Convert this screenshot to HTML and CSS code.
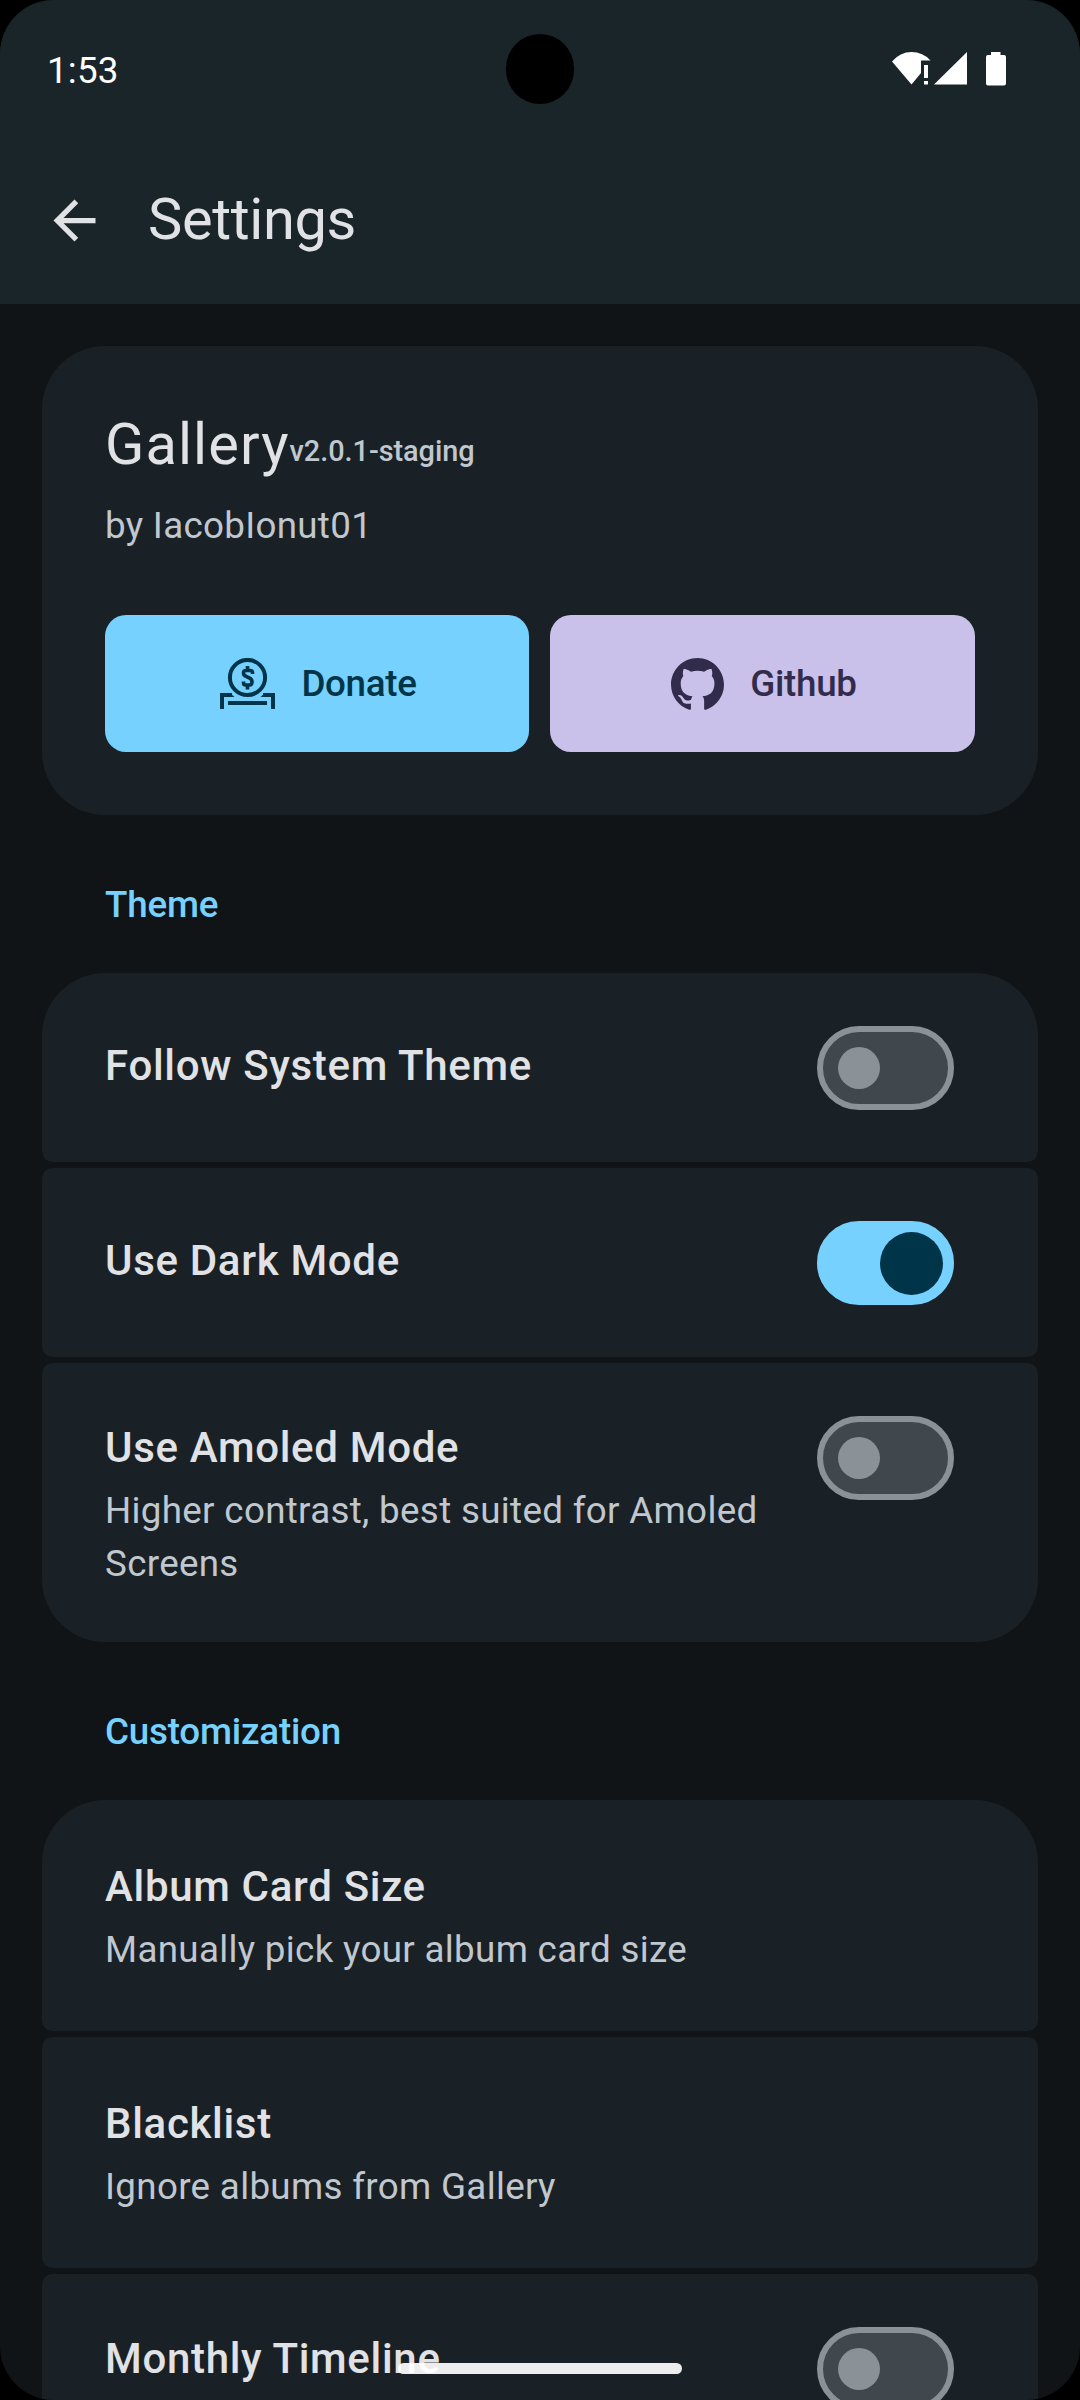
FILE: index.html
```
<!DOCTYPE html>
<html lang="en">
<head>
<meta charset="utf-8">
<title>Settings</title>
<link rel="stylesheet" href="styles.css">
</head>
<body>
<div class="screen">
  <header class="top">
    <div class="status">
      <span class="clock">1:53</span>
      <svg class="status-icons" width="116" height="36" viewBox="0 0 116 36" fill="#fff">
        <path d="M0 10.500Q8 1 19.500 1Q31 1 38.500 9.500H29V22L19.500 33.500Z"/>
        <path d="M32 14h4v13h-4zM32 30h4v3.500h-4zM42 33.500L75 1V33.500zM99 1h9.500v3H112q2 0 2 2V32.500q0 2-2 2H96q-2 0-2-2V6q0-2 2-2h3z"/>
      </svg>
    </div>
    <div class="appbar">
      <svg class="back" width="63" height="63" viewBox="0 0 24 24" fill="#e1e2e5"><path d="M20 11H7.830l5.590-5.590L12 4l-8 8 8 8 1.410-1.410L7.830 13H20v-2z"/></svg>
      <h1 class="title">Settings</h1>
    </div>
  </header>
  <main class="content">
    <section class="about">
      <div class="name-line"><span class="app-name">Gallery</span><span class="version">v2.0.1-staging</span></div>
      <p class="author">by IacobIonut01</p>
      <div class="actions">
        <button class="btn donate">
          <svg width="55" height="51" viewBox="0 0 55 51" fill="none" stroke="#003549" stroke-width="4">
            <circle cx="27.500" cy="19.500" r="17.600"/>
            <path d="M8 45H47"/>
            <path d="M2 51V37H12M53 51V37H43"/>
            <path d="M8 35H10L14.500 39H8ZM47 35H45L40.500 39H47Z" fill="#003549" stroke="none"/>
            <path d="M27.500 8V12M27.500 27.500V31.500M32.500 16V14.500Q32.500 12.500 30 12.500H26Q23.500 12.500 23.500 15Q23.500 17.500 26 18.300L29.500 20Q32 21 32 24Q32 27 29.500 27H25.500Q23.500 27 23.500 24.500V23.500" stroke-width="3.600"/>
          </svg>
          <span>Donate</span>
        </button>
        <button class="btn github">
          <svg width="53" height="52" viewBox="0 0 24 23.500" preserveAspectRatio="none" fill="#322c4c"><path d="M12 0C5.370 0 0 5.370 0 12c0 5.310 3.435 9.795 8.205 11.385.6.105.825-.255.825-.57 0-.285-.015-1.230-.015-2.235-3.015.555-3.795-.735-4.035-1.410-.135-.345-.72-1.410-1.230-1.695-.42-.225-1.020-.78-.015-.795.945-.015 1.620.87 1.845 1.230 1.080 1.815 2.805 1.305 3.495.99.105-.78.42-1.305.765-1.605-2.670-.3-5.460-1.335-5.460-5.925 0-1.305.465-2.385 1.230-3.225-.12-.3-.54-1.530.12-3.180 0 0 1.005-.315 3.300 1.230.96-.27 1.980-.405 3-.405s2.040.135 3 .405c2.295-1.560 3.300-1.230 3.300-1.230.66 1.650.24 2.880.12 3.180.765.84 1.230 1.905 1.230 3.225 0 4.605-2.805 5.625-5.475 5.925.435.375.81 1.095.81 2.220 0 1.605-.015 2.895-.015 3.300 0 .315.225.69.825.57A12.020 12.020 0 0 0 24 12c0-6.630-5.370-12-12-12z"/></svg>
          <span>Github</span>
        </button>
      </div>
    </section>

    <h2 class="section">Theme</h2>
    <div class="group">
      <div class="row single"><div class="text"><p class="name">Follow System Theme</p></div><span class="switch"></span></div>
      <div class="row single"><div class="text"><p class="name">Use Dark Mode</p></div><span class="switch on"></span></div>
      <div class="row last"><div class="text"><p class="name">Use Amoled Mode</p><p class="hint">Higher contrast, best suited for Amoled Screens</p></div><span class="switch"></span></div>
    </div>

    <h2 class="section">Customization</h2>
    <div class="group">
      <div class="row plain"><div class="text"><p class="name">Album Card Size</p><p class="hint">Manually pick your album card size</p></div></div>
      <div class="row plain"><div class="text"><p class="name">Blacklist</p><p class="hint">Ignore albums from Gallery</p></div></div>
      <div class="row"><div class="text"><p class="name">Monthly Timeline</p></div><span class="switch"></span></div>
    </div>
  </main>
  <div class="camera"></div>
  <div class="home-bar"></div>
</div>
</body>
</html>
```
FILE: styles.css
```
* { box-sizing: border-box; }
body { margin: 0; background: #000; font-family: Roboto, sans-serif; }
h1, h2, p { margin: 0; font-weight: 400; }
svg { display: block; flex: none; }

.screen { position: relative; width: 1080px; height: 2400px; overflow: hidden; border-radius: 54px; background: #101416; }

.top { height: 304px; background: #1a2529; color: #e1e2e5; }
.status { display: flex; justify-content: space-between; align-items: center; height: 137px; padding: 0 72px 0 47px; }
.clock { color: #fff; font-size: 36.75px; line-height: 44px; padding-top: 5px; letter-spacing: 0.2px; }
.appbar { display: flex; align-items: center; gap: 42px; height: 167px; padding-left: 43px; }
.title { margin-bottom: 3px; font-size: 57.75px; line-height: 74px; letter-spacing: -0.35px; }

.content { padding: 42px 42px 0; }
.about { height: 469px; padding: 63px; border-radius: 63px; background: #192126; }
.name-line { display: flex; align-items: center; height: 74px; }
.app-name { margin-bottom: 5px; font-size: 57.75px; line-height: 74px; color: #e1e2e5; letter-spacing: 1.1px; }
.version { font-size: 28.9px; font-weight: 500; line-height: 42px; color: #c0c7cf; padding-top: 10px; letter-spacing: -0.05px; }
.author { margin-top: 17px; font-size: 36.75px; line-height: 52px; color: #c0c7cf; letter-spacing: 0.3px; }
.actions { display: grid; grid-template-columns: 424px 425px; gap: 21px; margin-top: 63px; }
.btn { display: flex; align-items: center; justify-content: center; gap: 26px; height: 137px; padding: 0 0 0 3px; border: 0; border-radius: 21px; font: 500 36.75px/52px Roboto, sans-serif; letter-spacing: -0.3px; }
.donate { background: #76d1ff; color: #003549; }
.github { background: #c9c1e9; color: #322c4c; }

.section { padding: 63px 63px 42px; font-size: 36.75px; font-weight: 500; line-height: 53px; color: #76d1ff; letter-spacing: -0.2px; }
.group { display: flex; flex-direction: column; gap: 6px; }
.row { display: flex; justify-content: space-between; height: 231px; padding: 53px 84px 0 63px; border-radius: 10.5px; background: #192126; }
.row:first-child { border-radius: 63px 63px 10.5px 10.5px; }
.row.last { border-radius: 10.5px 10.5px 63px 63px; height: 279px; }
.row.single { height: 189px; }
.row.single .text { padding-top: 8px; }
.row.plain { padding-top: 55px; }
.text { flex: 1; padding-right: 40px; }
.name { font-size: 42px; font-weight: 500; line-height: 63px; color: #e1e2e5; letter-spacing: 0.68px; }
.hint { margin-top: 5px; font-size: 36.75px; line-height: 53px; color: #c0c7cf; letter-spacing: 0.32px; }
.switch { display: flex; align-items: center; flex: none; width: 137px; height: 84px; padding-left: 15px; border: 6px solid #8a9197; border-radius: 42px; background: #41484d; }
.switch::before { content: ""; width: 42px; height: 42px; border-radius: 50%; background: #8a9197; }
.switch.on { border-color: #76d1ff; background: #76d1ff; padding-left: 57px; }
.switch.on::before { width: 63px; height: 63px; background: #003549; }

.camera { position: absolute; left: 506px; top: 34px; width: 68px; height: 70px; border-radius: 35px; background: #000; }
.home-bar { position: absolute; left: 398px; top: 2363px; width: 284px; height: 11px; border-radius: 5.5px; background: rgba(255, 255, 255, 0.92); }
```
